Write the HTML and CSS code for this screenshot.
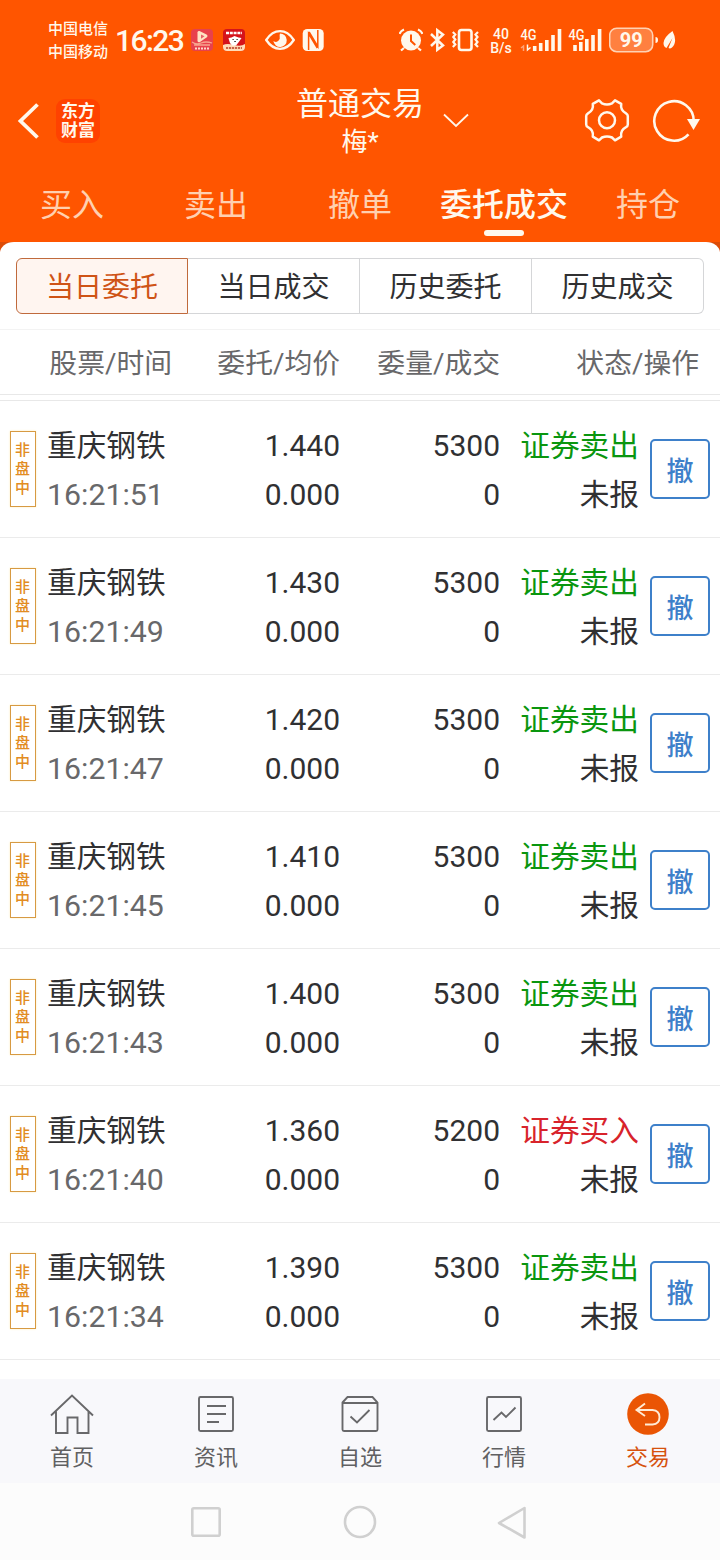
FILE: index.html
```html
<!DOCTYPE html>
<html lang="zh-CN">
<head>
<meta charset="utf-8">
<title>委托成交</title>
<link rel="stylesheet" href="styles.css">
</head>
<body>
<header class="top">
  <div class="status">
    <div class="carriers"><span>中国电信</span><span>中国移动</span></div>
    <div class="clock">16:23</div>
    <svg class="app1" width="22" height="40" viewBox="191 20 22 40"><rect x="191" y="29" width="22" height="22" rx="4" fill="#e8414c"/><path d="M197.500 32.500q0-2 2-1.500l7 3.500q2 1.500 0 3l-6.500 4.500q-2 1-2.500-1z" fill="#ffe3c4"/><path d="M201 34.500l3.500 1.800-3.500 2.400z" fill="#e8606a"/><path d="M192 42q4 3 9 1t11 0M194 45h16" stroke="#f7a58e" stroke-width="1.300" fill="none"/><path d="M195 48.500h14" stroke="#ffd9c8" stroke-width="2" stroke-dasharray="2 1"/></svg>
    <svg class="app2" width="22" height="40" viewBox="223 20 22 40"><rect x="223" y="29" width="22" height="22" rx="4" fill="#d5131b"/><path d="M223 45q4-2 11 0t11-1v3q0 4-4 4h-14q-4 0-4-4z" fill="#ffdcb8"/><path d="M226 33h16" stroke="#fff" stroke-width="2.400" stroke-dasharray="3 .8"/><path d="M228.500 38l3-.5 3-1.500 4 1.500 3 .5-2 3-1.500 2-2 2.500h-4l-2-2.500-1-3z" fill="#fff"/><path d="M232.500 39.500h1.200M236.500 39.500h1.200M234.300 41.500h1.500" stroke="#222" stroke-width="1.200"/><path d="M226 48h16" stroke="#ba3b24" stroke-width="1.500" stroke-dasharray="2.200 .8"/></svg>
    <svg class="eye" width="30" height="40" viewBox="265 20 30 40"><path d="M266.200 40Q272 31.200 280 31.200T293.800 40Q288 48.800 280 48.800T266.200 40z" fill="none" stroke="#fff8ec" stroke-width="2.300"/><path d="M280 33.500a6.700 6.700 0 1 1-6.600 7.500q3 2 5-.2t1.300-4.300q-.3-1.500.3-3z" fill="#fff8ec"/></svg>
    <svg class="nfc" width="22" height="40" viewBox="302 20 22 40"><rect x="302.700" y="29" width="21" height="22" rx="4.500" fill="#fff8ec"/><path d="M308.600 50v-16.500l8.700 14.500M317.800 30v16.500l-8.700-14.500" stroke="#ff5500" stroke-width="1.500" fill="none"/></svg>
    <svg class="alarm" width="24" height="40" viewBox="399 20 24 40"><circle cx="411" cy="40.500" r="10" fill="#fff8ec"/><path d="M399.500 34q1-3 4.500-4.500M422.500 34q-1-3-4.500-4.500M404 48l-3 2.500M418 48l3 2.500" stroke="#fff8ec" stroke-width="2.200" fill="none"/><path d="M411 34.500v6.500l4.300 4" stroke="#ff5500" stroke-width="2" fill="none"/></svg>
    <svg class="bt" width="16" height="40" viewBox="429 20 16 40"><path d="M431 34l12 11.500-5.700 4.300v-19.600l5.700 4.300-12 11.500" stroke="#fff8ec" stroke-width="2.500" fill="none"/></svg>
    <svg class="vib" width="29" height="40" viewBox="451 20 29 40"><rect x="459" y="30" width="12.500" height="20" rx="2.500" fill="none" stroke="#fff8ec" stroke-width="2.600"/><path d="M452.800 32l2.500 2.500-2 2.500 2 2.500-2 2.500 2 2.500-2.500 2.500M478 32l-2.500 2.500 2 2.500-2 2.500 2 2.500-2 2.500 2.500 2.500" fill="none" stroke="#fff8ec" stroke-width="2.200"/></svg>
    <div class="speed"><span>40</span><span>B/s</span></div>
    <svg class="sig1" width="43" height="40" viewBox="520 20 43 40"><text x="520.500" y="39.500" class="net" textLength="16" lengthAdjust="spacingAndGlyphs">4G</text><path d="M534.700 51v-5M540.700 51v-8M546.800 51v-11M553 51v-16M559.500 51v-22" stroke="#fff8ec" stroke-width="3.600"/><path d="M523.500 51v-5l-2.500 2" stroke="#ffa477" stroke-width="1.500" fill="none"/><path d="M527.500 44.500v5.500l3-2.500" stroke="#fff8ec" stroke-width="1.500" fill="none"/></svg>
    <svg class="sig2" width="34" height="40" viewBox="568 20 34 40"><text x="568.500" y="39.500" class="net" textLength="16" lengthAdjust="spacingAndGlyphs">4G</text><path d="M575 51v-6M580.800 51v-9M586.800 51v-12M593 51v-16M599.600 51v-22" stroke="#fff8ec" stroke-width="3.600"/></svg>
    <svg class="batt" width="67" height="40" viewBox="609 20 67 40"><rect x="609.700" y="28.200" width="43" height="23.500" rx="7" fill="#ff8040" stroke="#ffd2b4" stroke-width="1.600"/><text x="631.200" y="47.300" class="pct" text-anchor="middle">99</text><path d="M655.500 37q2.500 0 2.500 3t-2.500 3z" fill="#fff8ec"/><path d="M672.500 31q5.500 11-.5 16.500-2 1.500-3.500.5l4-10-6 10q-3-1-3-5 .5-6 9-12z" fill="#fff8ec"/></svg>
  </div>
  <div class="titlebar">
    <svg class="back" width="24" height="40" viewBox="17 101 24 40"><path d="M37.500 104.500L20.500 121l17 16.500" fill="none" stroke="#fff8ec" stroke-width="3.800"/></svg>
    <div class="logo"><span>东方</span><span>财富</span></div>
    <div class="title"><span class="t1">普通交易</span><span class="t2">梅*</span></div>
    <svg class="chev" width="26" height="16" viewBox="443 112 26 16"><path d="M444 113.500l12 11.500 12-11.500" fill="none" stroke="#fff8ec" stroke-width="1.800"/></svg>
    <svg class="gear" width="46" height="46" viewBox="584 98 46 46"><path d="M599 100.300L602 103.300Q607 105.500 612 103.300L615 100.300L621.200 103.800Q620.200 110.500 626 113.300Q627.800 114.300 627.800 116V124.500Q627.800 126.200 626 127.200Q620.200 130 621.200 136.700L615 140.300L612 137.500Q607 135.300 602 137.500L599 140.300L592.800 136.700Q593.800 130 588 127.200Q586.200 126.200 586.200 124.500V116Q586.200 114.300 588 113.300Q593.800 110.500 592.800 103.800z" fill="none" stroke="#fff8ec" stroke-width="2.500" stroke-linejoin="round"/><circle cx="607" cy="120.300" r="8" fill="none" stroke="#fff8ec" stroke-width="2.500"/></svg>
    <svg class="reload" width="48" height="46" viewBox="652 98 48 46"><path d="M688.500 134.300A19.700 19.700 0 1 1 693.700 121" fill="none" stroke="#fff8ec" stroke-width="2.600"/><path d="M687 119h13l-6.500 11z" fill="#fff8ec"/></svg>
  </div>
  <nav class="tabs"><a>买入</a><a>卖出</a><a>撤单</a><a class="on">委托成交</a><a>持仓</a></nav>
</header>
<main class="panel-wrap">
  <section class="panel">
    <div class="segs"><a class="on">当日委托</a><a>当日成交</a><a>历史委托</a><a>历史成交</a></div>
    <div class="head"><span>股票/时间</span><span>委托/均价</span><span>委量/成交</span><span>状态/操作</span></div>
    <div class="rows">
      <div class="row"><div class="tag">非盘中</div><div class="name">重庆钢铁<small>16:21:51</small></div><div class="num">1.440<br>0.000</div><div class="num">5300<br>0</div><div class="st"><b>证券卖出</b><br>未报</div><button>撤</button></div>
      <div class="row"><div class="tag">非盘中</div><div class="name">重庆钢铁<small>16:21:49</small></div><div class="num">1.430<br>0.000</div><div class="num">5300<br>0</div><div class="st"><b>证券卖出</b><br>未报</div><button>撤</button></div>
      <div class="row"><div class="tag">非盘中</div><div class="name">重庆钢铁<small>16:21:47</small></div><div class="num">1.420<br>0.000</div><div class="num">5300<br>0</div><div class="st"><b>证券卖出</b><br>未报</div><button>撤</button></div>
      <div class="row"><div class="tag">非盘中</div><div class="name">重庆钢铁<small>16:21:45</small></div><div class="num">1.410<br>0.000</div><div class="num">5300<br>0</div><div class="st"><b>证券卖出</b><br>未报</div><button>撤</button></div>
      <div class="row"><div class="tag">非盘中</div><div class="name">重庆钢铁<small>16:21:43</small></div><div class="num">1.400<br>0.000</div><div class="num">5300<br>0</div><div class="st"><b>证券卖出</b><br>未报</div><button>撤</button></div>
      <div class="row"><div class="tag">非盘中</div><div class="name">重庆钢铁<small>16:21:40</small></div><div class="num">1.360<br>0.000</div><div class="num">5200<br>0</div><div class="st"><b class="buy">证券买入</b><br>未报</div><button>撤</button></div>
      <div class="row"><div class="tag">非盘中</div><div class="name">重庆钢铁<small>16:21:34</small></div><div class="num">1.390<br>0.000</div><div class="num">5300<br>0</div><div class="st"><b>证券卖出</b><br>未报</div><button>撤</button></div>
    </div>
  </section>
</main>
<nav class="bottom">
  <a><svg width="44" height="44" viewBox="50 1392 44 44"><path d="M51 1415.500l21-20 21 20M56 1411.500v21.500h11.500v-15.500h10v15.500h11v-21.500"/></svg>首页</a>
  <a><svg width="44" height="44" viewBox="194 1392 44 44"><rect x="199" y="1397" width="34" height="34" rx="1.500"/><path d="M207 1406h19M207 1414h19M207 1422h12"/></svg>资讯</a>
  <a><svg width="44" height="44" viewBox="338 1392 44 44"><path d="M342.500 1402.500l5-5.500h25l5 5.500v27q0 1.500-1.500 1.500h-32q-1.500 0-1.500-1.500zM342.500 1403h35M350.500 1416.500l6.500 6 12.500-12.500"/></svg>自选</a>
  <a><svg width="44" height="44" viewBox="482 1392 44 44"><rect x="487" y="1397" width="34" height="34" rx="1.500"/><path d="M493.500 1420l8-7.500 4.500 4.500 9.500-9.500"/></svg>行情</a>
  <a class="on"><svg width="44" height="44" viewBox="626 1392 44 44"><circle cx="648" cy="1414" r="20.800"/><path d="M645 1403.500l-8.500 6.500 8.500 6M637 1410h15.500q7 .7 7 7.200t-7 7.300h-7.500"/></svg>交易</a>
</nav>
<footer class="sys">
  <svg width="32" height="34" viewBox="190 1505 32 34"><rect x="192.300" y="1508.300" width="27.400" height="27.400" rx="1.500"/></svg>
  <svg width="36" height="36" viewBox="342 1503 36 36"><circle cx="360" cy="1521" r="15"/></svg>
  <svg width="32" height="36" viewBox="496 1503 32 36"><path d="M524.500 1507v29.500l-25.500-14.500z"/></svg>
</footer>
</body>
</html>
```
FILE: styles.css
```css
* { box-sizing: border-box; }
body { margin: 0; width: 720px; height: 1560px; overflow: hidden; display: flex; flex-direction: column; background: #fff; color: #303032; font-family: Roboto, "Noto Sans CJK SC", sans-serif; }
svg { display: block; flex: none; }
.top { background: #ff5500; color: #fff8ec; height: 242px; flex: none; }

.status { display: flex; align-items: center; height: 80px; padding-left: 48px; }
.carriers { display: flex; flex-direction: column; width: 67px; padding-top: 1px; font-size: 15px; font-weight: 500; line-height: 23px; }
.clock { width: 76px; font-size: 30px; font-weight: 500; letter-spacing: -1.6px; line-height: 40px; padding-top: 2px; white-space: nowrap; }
.app2 { margin-left: 10px; }
.eye { margin-left: 20px; }
.nfc { margin-left: 7px; }
.alarm { margin-left: 75px; }
.bt { margin-left: 6px; }
.vib { margin-left: 6px; }
.speed { display: flex; flex-direction: column; align-items: center; width: 26px; margin-left: 8px; padding-top: 2px; font-size: 14px; font-weight: 500; line-height: 14px; }
.sig1 { margin-left: 6px; }
.sig2 { margin-left: 5px; }
.batt { margin-left: 7px; }
.net { font: 500 14px Roboto, sans-serif; fill: #fff8ec; }
.pct { font: 700 20px Roboto, sans-serif; fill: #fff8ec; }

.titlebar { display: flex; align-items: center; height: 82px; padding-left: 17px; }
.logo { display: flex; flex-direction: column; align-items: center; justify-content: center; width: 44px; height: 44px; margin-left: 15px; border-radius: 9px; background: #ff4200; font-size: 17px; font-weight: 700; line-height: 19px; }
.title { display: flex; flex-direction: column; align-items: center; width: 128px; margin-left: 196px; padding-top: 2px; }
.t1 { font-size: 32px; line-height: 40px; }
.t2 { font-size: 26px; line-height: 36px; }
.chev { margin-left: 19px; }
.gear { margin-left: 115px; }
.reload { margin-left: 22px; }

.tabs { display: flex; height: 80px; }
.tabs a { width: 144px; display: flex; flex-direction: column; align-items: center; padding-top: 19px; font-size: 32px; line-height: 48px; color: #ffd0b0; }
.tabs .on { color: #fff8ec; font-weight: 500; }
.tabs .on::after { content: ""; width: 40px; height: 6px; margin-top: 1px; border-radius: 3px; background: #fff8ec; }

.panel-wrap { background: linear-gradient(#dc4c08 10px, #fff 10px); flex: none; height: 1137px; }
.panel { background: #fff; border-radius: 14px 14px 0 0 / 11px 11px 0 0; padding-top: 16px; }
.segs { display: flex; margin: 0 16px 15px; }
.segs a { width: 172px; height: 56px; border: 1px solid #d5d6d8; font-size: 28px; line-height: 57px; text-align: center; }
.segs a + a { border-left-width: 0; }
.segs a:last-child { border-radius: 0 6px 6px 0; }
.segs .on { border-color: #c06a3c; border-radius: 6px 0 0 6px; background: #fff5f0; color: #cf5316; }
.head { display: flex; height: 66px; border-top: 1px solid #f3f3f3; border-bottom: 1px solid #e8e8e8; font-size: 27.800px; line-height: 68px; color: #68686a; text-align: right; }
.head span:nth-child(1) { width: 172px; }
.head span:nth-child(2) { width: 168px; }
.head span:nth-child(3) { width: 160px; }
.head span:nth-child(4) { width: 199px; }
.rows { margin-top: 5px; border-top: 1px solid #e8e8e8; }
.row { display: grid; grid-template-columns: 26px 184px 120px 160px 140px 70px; height: 137px; padding: 20px 10px 0; border-bottom: 1px solid #ebebeb; font-size: 30px; line-height: 49px; }
.tag { height: 76px; width: 26px; margin-top: 10px; padding: 9px 5px 0 4px; border: 1px solid #d79a42; font-size: 15px; font-weight: 500; line-height: 19px; color: #e28c22; text-align: center; word-break: break-all; box-shadow: 0 0 2px #ffedba; }
.name { padding-left: 11px; font-size: 29.700px; }
.name small { display: block; font-size: 30.300px; color: #68686a; }
.num, .st { text-align: right; }
.st { padding-right: 1px; font-size: 29.700px; }
.st b { font-weight: 400; color: #0a960f; }
.st .buy { color: #d8232b; }
.row button { justify-self: end; width: 60px; height: 60px; margin: 18px 0 0; padding: 0; border: 2px solid #3e80ca; border-radius: 5px; background: #fff; color: #3e80ca; font: 500 27px/55px "Noto Sans CJK SC", sans-serif; }

.bottom { display: flex; height: 104px; flex: none; background: #f8f8fb; }
.bottom a { width: 144px; display: flex; flex-direction: column; align-items: center; padding-top: 13px; font-size: 22px; line-height: 43px; color: #606062; }
.bottom svg { fill: none; stroke: #68686a; stroke-width: 1.900; }
.bottom .on { color: #d6520e; }
.bottom .on circle { fill: #ea5504; stroke: none; }
.bottom .on path { stroke: #ffebd6; }
.sys { display: flex; align-items: center; height: 77px; background: #fcfcfc; padding-left: 190px; gap: 119px; }
.sys svg { fill: none; stroke: #d0d0d0; stroke-width: 2.600; stroke-linejoin: round; }
.sys svg:nth-child(2) { margin: 0 -1px 0 1px; }
```
